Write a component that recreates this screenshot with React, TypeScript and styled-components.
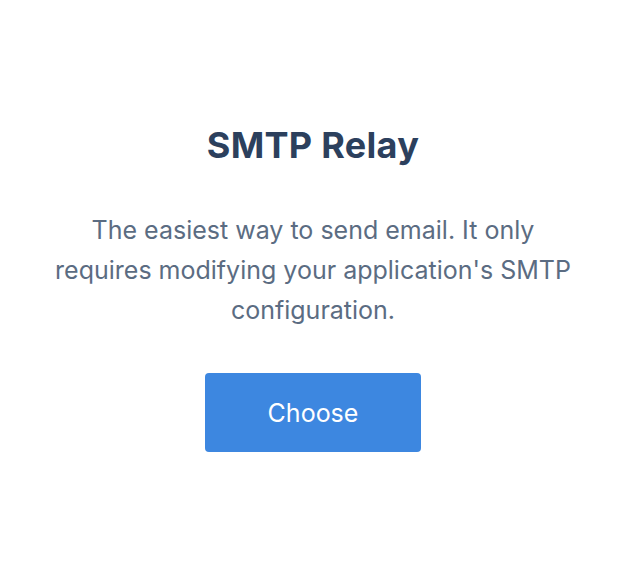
import React from "react";
import styled, { createGlobalStyle } from "styled-components";

const Global = createGlobalStyle`
  html, body { margin: 0; padding: 0; background: #ffffff; }
  body { font-family: Inter, "Noto Sans", sans-serif; -webkit-font-smoothing: antialiased; }
`;

const Page = styled.div`
  width: 626px;
  height: 566px;
  display: flex;
  flex-direction: column;
  align-items: center;
  box-sizing: border-box;
  padding-top: 123px;
`;

const Title = styled.h1`
  margin: 0;
  font-size: 36px;
  font-weight: 700;
  line-height: 44px;
  color: #2c405d;
  letter-spacing: 0.3px;
`;

const Description = styled.p`
  margin: 43px 0 0;
  width: 530px;
  text-align: center;
  font-size: 25px;
  line-height: 40px;
  color: #5b6c82;
`;

const ChooseButton = styled.button`
  margin-top: 43px;
  width: 216px;
  height: 79px;
  border: none;
  border-radius: 4px;
  background: #3d87e0;
  color: #ffffff;
  font-family: Inter, "Noto Sans", sans-serif;
  font-size: 25px;
  cursor: pointer;
`;

export default function App() {
  return (
    <>
      <Global />
      <Page>
        <Title>SMTP Relay</Title>
        <Description>
          The easiest way to send email. It only requires modifying your application's SMTP configuration.
        </Description>
        <ChooseButton>Choose</ChooseButton>
      </Page>
    </>
  );
}
